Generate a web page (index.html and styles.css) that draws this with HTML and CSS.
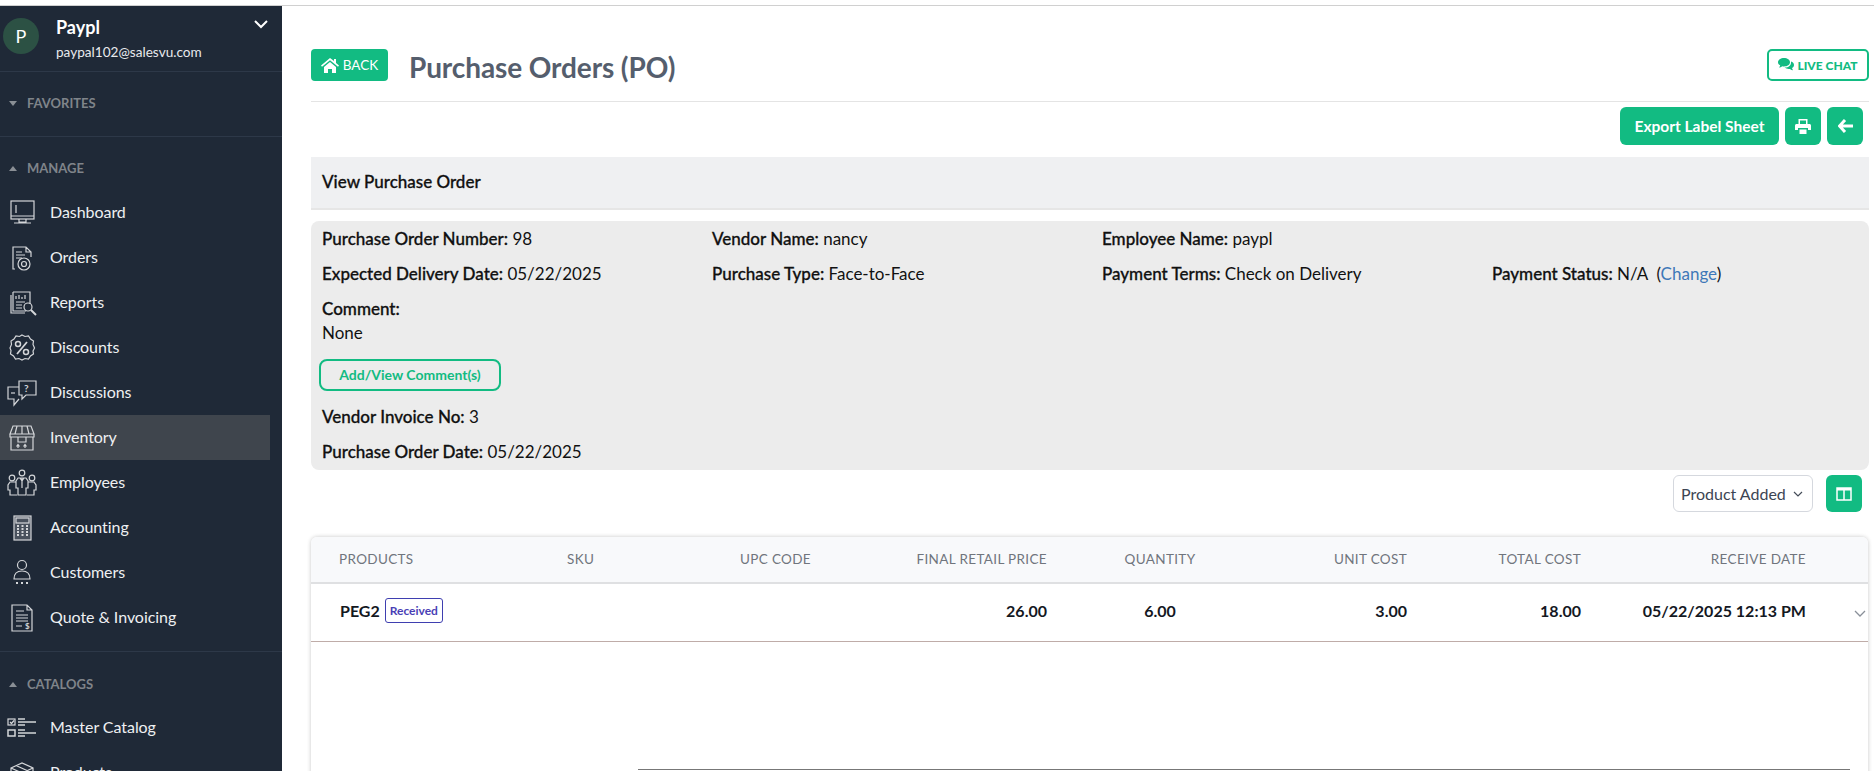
FILE: index.html
```html
<!DOCTYPE html>
<html lang="en">
<head>
<meta charset="utf-8">
<title>Purchase Orders (PO)</title>
<link rel="stylesheet" href="styles.css">
</head>
<body>
<div class="topline"></div>
<div class="app">
  <aside class="sidebar">
    <div class="profile">
      <div class="avatar">P</div>
      <div class="who"><div class="name">Paypl</div><div class="email">paypal102@salesvu.com</div></div>
      <svg class="profile-chev" width="16" height="10" viewBox="0 0 16 10"><path d="M2 2l6 6 6-6" fill="none" stroke="#fff" stroke-width="2"/></svg>
    </div>
    <section class="sec sec-fav">
      <div class="sec-label"><i class="caret down"></i>FAVORITES</div>
    </section>
    <section class="sec sec-manage">
      <div class="sec-label"><i class="caret up"></i>MANAGE</div>
      <ul class="menu">
        <li class="item"><svg class="ico" viewBox="0 0 30 30"><rect x="4" y="3" width="23" height="18"/><path d="M4 18h23M9 7v8M12 21v3h7v-3M7 25h17"/></svg>Dashboard</li>
        <li class="item"><svg class="ico" viewBox="0 0 30 30"><path d="M8 26H6V4h13l5 5v5M19 4v5h5M9 9h6M9 12h9M9 15h6"/><circle cx="17" cy="21" r="6"/><circle cx="17" cy="21" r="2.5"/></svg>Orders</li>
        <li class="item"><svg class="ico" viewBox="0 0 30 30"><path d="M6 4h17v12M6 4v19h13M4 7v18h14"/><path d="M9 11V8M12 11V7M15 11V9M18 11V7M9 14h9M9 17h6M9 20h6"/><circle cx="21" cy="19" r="4"/><path d="M24 22l5 5" stroke-width="2"/></svg>Reports</li>
        <li class="item"><svg class="ico" viewBox="0 0 30 30"><path d="M15 2l3 1.500 3.500-.5 2 3 3 2-.5 3.500L27.500 15l-1.500 3 .5 3-3 2-2 3-3.500-.5L15 27l-3-1.500-3.500.5-2-3-3-2 .5-3.500L3 15l1.500-3.500L4 8l3-2 2-3 3.500.5z"/><circle cx="11" cy="11" r="2.500" stroke-width="1.500"/><circle cx="19" cy="19" r="2.500" stroke-width="1.500"/><path d="M20 9L10 21" stroke-width="1.800"/></svg>Discounts</li>
        <li class="item"><svg class="ico" viewBox="0 0 30 30"><path d="M12 3h17v14H19l-4 4v-4h-3zM12 9H1v12h6v6l5-6"/><path d="M4 15h4" /><text x="17" y="14" class="ico-q">?</text></svg>Discussions</li>
        <li class="item active"><svg class="ico" viewBox="0 0 30 30"><path d="M6 3h18l3 8H3zM3 11v3h24v-3M4 14v13h22V14M10 3l-2 8M15 3v8M20 3l2 8M11 14v5h8v-5"/><path d="M11 25v-3M9.500 23.500l1.500-2 1.500 2M18 25v-3M16.500 23.500l1.500-2 1.500 2"/></svg>Inventory</li>
        <li class="item"><svg class="ico" viewBox="0 0 30 30"><circle cx="15" cy="5" r="2.800"/><circle cx="5" cy="10" r="2.800"/><circle cx="25" cy="10" r="2.800"/><path d="M9 13l2-3h8l2 3v7h-2v7h-8v-7H9zM15 10v10M13 10l2 3 2-3"/><path d="M9 14H3l-2 3v5h2v5h7M21 14h6l2 3v5h-2v5h-7"/></svg>Employees</li>
        <li class="item"><svg class="ico" viewBox="0 0 30 30"><rect x="7" y="3" width="17" height="24" class="ico-tint"/><rect x="9" y="5" width="13" height="5"/><path d="M10 13h2M14.500 13h2M19 13h2M10 16h2M14.500 16h2M19 16h2M10 19h2M14.500 19h2M19 19h2M10 22h2M14.500 22h2M19 22h2" stroke-width="2"/></svg>Accounting</li>
        <li class="item"><svg class="ico" viewBox="0 0 30 30"><circle cx="15" cy="7" r="4.500"/><path d="M7 21c0-5 3-8 8-8s8 3 8 8zM7 21h16"/><path d="M9 25h2M14 25h2M19 25h2" stroke-width="2"/></svg>Customers</li>
        <li class="item"><svg class="ico" viewBox="0 0 30 30"><path d="M5 2h15l5 5v21H5zM20 2v5h5M9 8h8M9 12h12M9 15h12M9 18h12M9 23h6"/><text x="18" y="26" class="ico-d">$</text></svg>Quote &amp; Invoicing</li>
      </ul>
    </section>
    <section class="sec sec-cat">
      <div class="sec-label"><i class="caret up"></i>CATALOGS</div>
      <ul class="menu">
        <li class="item"><svg class="ico" viewBox="0 0 30 30"><rect x="1" y="6" width="7" height="6"/><path d="M3 9l1.500 1.500L7 7.500"/><rect x="1" y="17" width="7" height="6" stroke-width="1.500"/><path d="M11 6h7M11 9h18M11 12h7M11 17h7M11 20h18M11 23h7" stroke-width="1.500"/></svg>Master Catalog</li>
        <li class="item"><svg class="ico" viewBox="0 0 30 30"><path d="M4 10l11-5 11 5v13l-11 5-11-5zM4 10l11 5 11-5M15 15v13M9 7.500l11 5"/></svg>Products</li>
      </ul>
    </section>
  </aside>

  <main class="main">
    <header class="page-head">
      <button class="btn-back"><svg width="18" height="16" viewBox="0 0 18 16"><path d="M9 1L0 8.500l1 1.200L9 3.200l8 6.500 1-1.200-3-2.500V2h-2v2zM3 10v6h4v-4h4v4h4v-6L9 5z" fill="#fff"/></svg>BACK</button>
      <h1 class="title">Purchase Orders (PO)</h1>
      <button class="btn-chat"><svg width="16" height="14" viewBox="0 0 16 14"><path d="M6 0c3.300 0 6 1.800 6 4.200S9.300 8.400 6 8.400c-.6 0-1.200 0-1.700-.2C3.300 9 2.200 9.400 1 9.500c.6-.6 1-1.300 1.200-2.200C.8 6.600 0 5.500 0 4.200 0 1.800 2.700 0 6 0z" fill="#12bb82"/><path d="M13 3.500c1.800.6 3 1.900 3 3.500 0 1.200-.7 2.300-2 3 .2.900.6 1.600 1.200 2.200-1.200-.1-2.300-.5-3.300-1.300-1.900.3-4-.2-5.400-1.300 3.500.2 7-1.800 6.500-6.100z" fill="#12bb82"/></svg>LIVE CHAT</button>
    </header>

    <div class="actions">
      <button class="btn-green btn-text">Export Label Sheet</button>
      <button class="btn-green btn-icon"><svg width="16" height="15" viewBox="0 0 16 15"><path d="M3.500 0h9v5H11V1.500H5V5H3.500zM1.500 5h13c.8 0 1.500.7 1.500 1.500V11h-3V9H3v2H0V6.500C0 5.700.7 5 1.500 5zM4.500 10.500h7V15h-7z" fill="#fff"/></svg></button>
      <button class="btn-green btn-icon"><svg width="15" height="14" viewBox="0 0 15 14"><path d="M7 1L1.500 7 7 13M2 7h13" fill="none" stroke="#fff" stroke-width="3"/></svg></button>
    </div>

    <div class="panel-head">View Purchase Order</div>

    <section class="details">
      <div class="d-grid">
        <div class="d"><b>Purchase Order Number:</b> 98</div>
        <div class="d"><b>Vendor Name:</b> nancy</div>
        <div class="d"><b>Employee Name:</b> paypl</div>
        <div class="d"></div>
        <div class="d"><b>Expected Delivery Date:</b> 05/22/2025</div>
        <div class="d"><b>Purchase Type:</b> Face-to-Face</div>
        <div class="d"><b>Payment Terms:</b> Check on Delivery</div>
        <div class="d"><b>Payment Status:</b> N/A &nbsp;(<a class="link">Change</a>)</div>
      </div>
      <div class="d c-label"><b>Comment:</b></div>
      <div class="d">None</div>
      <button class="btn-outline">Add/View Comment(s)</button>
      <div class="d"><b>Vendor Invoice No:</b> 3</div>
      <div class="d d-last"><b>Purchase Order Date:</b> 05/22/2025</div>
    </section>

    <div class="toolbar">
      <div class="select">Product Added<svg width="12" height="8" viewBox="0 0 12 8"><path d="M2 2l4 4 4-4" fill="none" stroke="#444c58" stroke-width="1.200"/></svg></div>
      <button class="btn-green btn-cols"><svg width="16" height="14" viewBox="0 0 16 14"><rect x="1" y="1" width="14" height="12" fill="none" stroke="#fff" stroke-width="1.500"/><rect x="1" y="1" width="14" height="2.500" fill="#fff"/><path d="M8 1v12" stroke="#fff" stroke-width="1.500"/></svg></button>
    </div>

    <section class="card">
      <div class="t-row t-head">
        <div>PRODUCTS</div><div>SKU</div><div>UPC CODE</div>
        <div class="r">FINAL RETAIL PRICE</div><div class="c">QUANTITY</div><div class="r">UNIT COST</div><div class="r">TOTAL COST</div><div class="r">RECEIVE DATE</div>
      </div>
      <div class="t-row t-body">
        <div class="prod">PEG2<span class="badge">Received</span></div><div></div><div></div>
        <div class="r">26.00</div><div class="c">6.00</div><div class="r">3.00</div><div class="r">18.00</div><div class="r">05/22/2025 12:13 PM</div>
        <svg class="row-chev" width="14" height="9" viewBox="0 0 14 9"><path d="M2 2l5 5 5-5" fill="none" stroke="#8a9099" stroke-width="1.300"/></svg>
      </div>
      <div class="sub-line"></div>
    </section>
  </main>
</div>
</body>
</html>
```

FILE: styles.css
```css
* { box-sizing: border-box; }
html, body { margin: 0; height: 771px; overflow: hidden; background: #fff; }
body { font-family: "Lato", "Liberation Sans", sans-serif; font-size: 16px; color: #111; }
button { font-family: inherit; cursor: pointer; padding: 0; }

.topline { height: 6px; border-bottom: 1px solid #d0d0d0; }
.app { display: flex; height: 765px; }

/* sidebar */
.sidebar { width: 282px; flex: none; background: #1f2937; color: #fff; overflow: hidden; }
.profile { display: flex; height: 66px; padding: 12px 14px 0 3px; border-bottom: 1px solid #2d3848; position: relative; }
.avatar { width: 36px; height: 36px; border-radius: 50%; background: #2c5144; color: #fff; display: flex; align-items: center; justify-content: center; font-size: 18px; flex: none; }
.who { margin-left: 17px; margin-top: -2px; }
.name { font-size: 18px; font-weight: 700; line-height: 22px; }
.email { font-size: 13.600px; line-height: 18px; margin-top: 5px; color: #e8eaed; }
.profile-chev { position: absolute; left: 253px; top: 13px; }

.sec { border-bottom: 1px solid #2d3848; }
.sec-fav { height: 65px; padding-top: 22px; }
.sec-manage { height: 515px; padding-top: 22px; }
.sec-cat { padding-top: 23px; border-bottom: 0; }
.sec-label { display: flex; align-items: center; font-size: 13px; line-height: 18px; color: #7f848a; font-weight: 700; padding-left: 9px; }
.caret { width: 0; height: 0; border-left: 4.500px solid transparent; border-right: 4.500px solid transparent; margin-right: 10px; }
.caret.down { border-top: 5px solid #8a8f95; }
.caret.up { border-bottom: 5px solid #8a8f95; }

.menu { list-style: none; margin: 13px 0 0; padding: 0; }
.sec-cat .menu { margin-top: 12px; }
.item { display: flex; align-items: center; height: 45px; width: 270px; padding: 0 0 2px 7px; font-size: 16px; color: #eef0f2; letter-spacing: -.05px; }
.item.active { background: #3f454d; }
.ico { width: 30px; height: 30px; margin: 2px 13px 0 0; flex: none; fill: none; stroke: #d4d6d9; stroke-width: 1.200; }
.ico-tint { fill: rgba(200,204,208,.25); }
.ico-q { font-size: 10px; font-weight: 700; fill: #d4d6d9; stroke: none; }
.ico-d { font-size: 8px; font-weight: 700; fill: #d4d6d9; stroke: none; }

/* main */
.main { flex: 1; min-width: 0; padding: 0 5px 0 29px; }
.page-head { display: flex; align-items: center; padding-top: 43px; padding-bottom: 20px; border-bottom: 1px solid #e4e4e4; height: 96px; }
.btn-back { width: 77px; height: 32px; background: #12bb82; border: 0; border-radius: 4px; color: #fff; font-size: 13.500px; display: flex; align-items: center; justify-content: center; gap: 4px; }
.title { margin: 4px 0 0 21px; font-size: 28px; font-weight: 700; color: #555e6d; line-height: 34px; letter-spacing: -.1px; }
.btn-chat { margin-left: auto; width: 102px; height: 32px; background: #fff; border: 2px solid #12bb82; border-radius: 5px; color: #12bb82; font-size: 12px; font-weight: 900; display: flex; align-items: center; justify-content: center; gap: 3px; }

.actions { display: flex; justify-content: flex-end; gap: 6px; padding: 5px 6px 0 0; }
.btn-green { background: #12bb82; border: 0; color: #fff; border-radius: 6px; height: 38px; display: flex; align-items: center; justify-content: center; }
.btn-text { width: 159px; font-size: 15.500px; font-weight: 700; }
.btn-icon { width: 36px; }

.panel-head { margin-top: 12px; height: 53px; padding: 0 0 3px 11px; background: #eff0f2; border-bottom: 2px solid #e6e6e6; display: flex; align-items: center; font-size: 17px; font-weight: 500; color: #111; -webkit-text-stroke: .3px #111; }

.details { margin-top: 11px; height: 249px; padding: 6px 11px 5px; background: #ececec; border-radius: 8px; }
.d-grid { display: grid; grid-template-columns: repeat(4, 390px); row-gap: 11px; margin-bottom: 11px; }
.d { line-height: 24px; font-size: 17px; color: #111; white-space: nowrap; }
.d b { font-weight: 500; -webkit-text-stroke: .3px #111; }
.link { color: #3e78b8; }
.btn-outline { display: block; width: 182px; height: 32px; margin: 14px 0 14px -3px; padding-bottom: 2px; background: transparent; border: 2px solid #12bb82; border-radius: 8px; color: #12bb82; font-size: 14px; font-weight: 700; }
.d-last { margin-top: 11px; }

.toolbar { display: flex; justify-content: flex-end; gap: 13px; padding-right: 7px; margin-top: 5px; }
.select { width: 140px; height: 37px; border: 1px solid #d5d8de; border-radius: 6px; background: #fff; color: #3c4553; font-size: 16px; display: flex; align-items: center; justify-content: space-between; padding: 0 8px 0 7px; white-space: nowrap; }
.btn-cols { width: 36px; height: 37px; }

.card { margin-top: 25px; margin-right: 1px; height: 240px; border-radius: 6px 6px 0 0; box-shadow: 0 0 4px rgba(0,0,0,.22); background: #fff; overflow: hidden; }
.t-row { display: grid; grid-template-columns: 256px 173px 100px 207px 226px 134px 174px 225px; align-items: center; }
.t-row > div:first-child { padding-left: 28px; }
.t-head { height: 47px; background: #f8f9fb; border-bottom: 2px solid #dfe0e2; color: #70757d; font-size: 13.500px; letter-spacing: .35px; padding-bottom: 2px; }
.t-body { height: 58px; border-bottom: 1px solid #bfaca8; font-weight: 700; font-size: 16px; color: #14181f; position: relative; }
.t-body > div { margin-top: -4px; }
.r { text-align: right; white-space: nowrap; }
.c { text-align: center; }
.t-head > div:nth-child(3) { white-space: nowrap; }
.prod { display: flex; align-items: center; }
.t-row > .prod:first-child { padding-left: 29px; }
.badge { margin-left: 5px; height: 25px; width: 58px; border: 1px solid #3f3fb0; border-radius: 3px; color: #4a3fb5; font-size: 12px; font-weight: 700; display: flex; align-items: center; justify-content: center; }
.row-chev { position: absolute; left: 1542px; top: 25px; }
.sub-line { height: 1px; margin: 127px 18px 0 327px; background: #777; }
```
